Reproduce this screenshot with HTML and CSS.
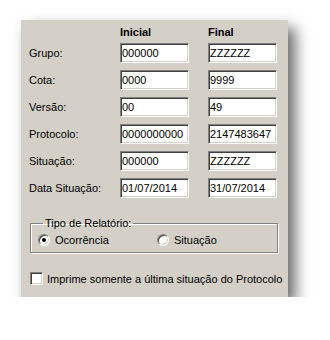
FILE: index.html
```html
<!DOCTYPE html>
<html>
  <head>
    <meta charset="utf-8" />
    <title>Filtro de Protocolos</title>
    <link rel="stylesheet" href="styles.css">
  </head>
  <body>
    <div class="panel">
      <div class="heads">
        <span></span>
        <span class="head">Inicial</span>
        <span class="head">Final</span>
      </div>

      <div class="fields">
        <label>Grupo:</label>
        <input class="edit" value="000000" />
        <input class="edit" value="ZZZZZZ" />

        <label>Cota:</label>
        <input class="edit" value="0000" />
        <input class="edit" value="9999" />

        <label>Versão:</label>
        <input class="edit" value="00" />
        <input class="edit" value="49" />

        <label>Protocolo:</label>
        <input class="edit" value="0000000000" />
        <input class="edit" value="2147483647" />

        <label>Situação:</label>
        <input class="edit" value="000000" />
        <input class="edit" value="ZZZZZZ" />

        <label>Data Situação:</label>
        <input class="edit" value="01/07/2014" />
        <input class="edit" value="31/07/2014" />
      </div>

      <fieldset class="group">
        <legend>Tipo de Relatório:</legend>
        <div class="option">
          <span class="radio checked"></span>Ocorrência
        </div>
        <div class="option">
          <span class="radio"></span>Situação
        </div>
      </fieldset>

      <div class="check-row">
        <span class="check"></span>Imprime somente a última situação do Protocolo
      </div>
    </div>
  </body>
</html>
```

FILE: styles.css
```css
body {
  margin: 0;
  background: #fff;
  font-family: "Liberation Sans", Arial, sans-serif;
  font-size: 11px;
  color: #000;
}

.panel {
  margin: 20px 0 0 21px;
  width: 267px;
  height: 277px;
  box-sizing: border-box;
  padding: 6px 0 0 8px;
  background: #d4d0c8;
  box-shadow: 7px 8px 14px rgba(0, 0, 0, 0.6);
}

.heads,
.fields {
  display: grid;
  grid-template-columns: 72px 69px 69px;
  column-gap: 19px;
}

.heads {
  height: 13px;
  line-height: 13px;
  margin-bottom: 4px;
}
.head {
  font-weight: bold;
}

.fields {
  grid-auto-rows: 20px;
  row-gap: 7px;
  align-items: center;
}
.fields label {
  white-space: nowrap;
}

.edit {
  box-sizing: border-box;
  width: 69px;
  height: 20px;
  margin: 0;
  padding: 0 1px;
  font: 11px "Liberation Sans", Arial, sans-serif;
  color: #000;
  background: #fff;
  border: 1px solid;
  border-color: #808080 #fff #fff #808080;
  box-shadow: inset 1px 1px 0 #404040, inset -1px -1px 0 #d4d0c8;
  outline: none;
}

.group {
  margin: 19px 0 0 1px;
  width: 248px;
  height: 36px;
  box-sizing: border-box;
  padding: 0 0 0 7px;
  border: 1px solid #808080;
  box-shadow: 1px 1px 0 #fff, inset 1px 1px 0 #fff;
  display: flex;
  align-items: center;
}
.group legend {
  padding: 0 2px;
  margin-left: 5px;
  line-height: 12px;
}

.option {
  display: flex;
  align-items: center;
  width: 119px;
  margin-top: -2px;
}

.radio {
  width: 12px;
  height: 12px;
  box-sizing: border-box;
  border-radius: 50%;
  margin-right: 5px;
  background: #fff;
  border: 1px solid;
  border-color: #808080 #fff #fff #808080;
  box-shadow: inset 1px 1px 0 #404040, inset -1px -1px 0 #d4d0c8;
  position: relative;
}
.radio.checked::after {
  content: "";
  position: absolute;
  left: 3px;
  top: 3px;
  width: 4px;
  height: 4px;
  border-radius: 50%;
  background: #000;
}

.check-row {
  display: flex;
  align-items: center;
  margin: 19px 0 0 1px;
}
.check {
  width: 13px;
  height: 13px;
  box-sizing: border-box;
  margin-right: 4px;
  background: #fff;
  border: 1px solid;
  border-color: #808080 #fff #fff #808080;
  box-shadow: inset 1px 1px 0 #404040, inset -1px -1px 0 #d4d0c8;
}
```
